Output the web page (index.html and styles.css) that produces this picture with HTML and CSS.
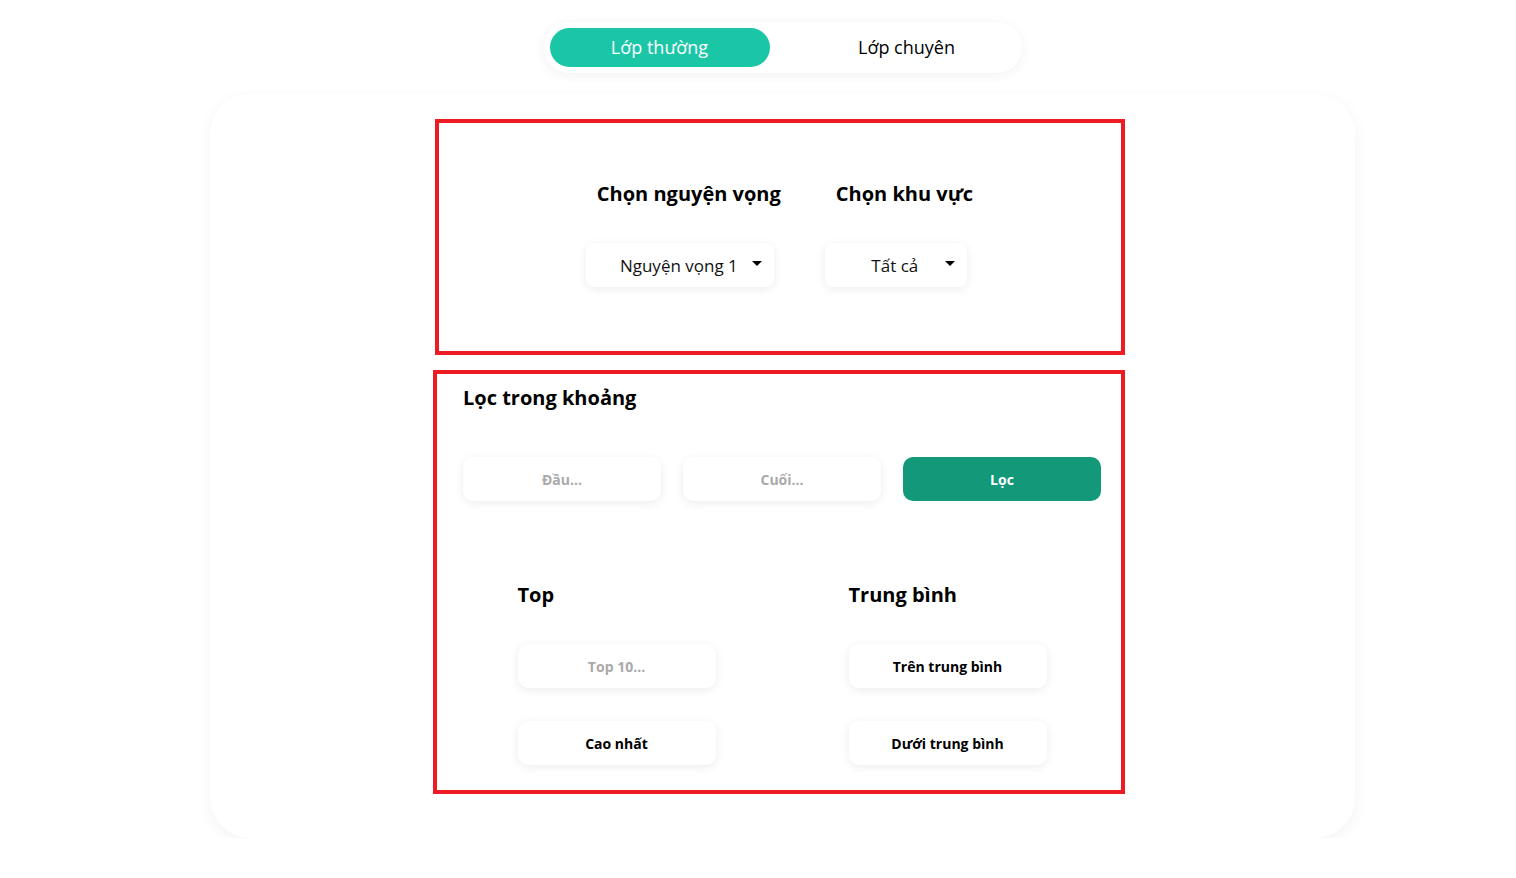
FILE: index.html
```html
<!DOCTYPE html>
<html>
<head>
    <title>Tra cứu điểm</title>
    <link rel="stylesheet" href="styles.css">
</head>
<body>
<div class="page">
    <div class="tabs">
        <button type="button" class="tab tab-active">Lớp thường</button>
        <button type="button" class="tab tab-second">Lớp chuyên</button>
    </div>

    <div class="card">
        <div class="box box-choose">
            <div class="pick">
                <h3 class="pick-title">Chọn nguyện vọng</h3>
                <div class="dropdown dropdown-wide">
                    <span class="dropdown-text">Nguyện vọng 1</span>
                    <span class="caret"></span>
                </div>
            </div>
            <div class="pick">
                <h3 class="pick-title">Chọn khu vực</h3>
                <div class="dropdown dropdown-small">
                    <span class="dropdown-text">Tất cả</span>
                    <span class="caret"></span>
                </div>
            </div>
        </div>

        <div class="box box-filter">
            <h3 class="filter-title">Lọc trong khoảng</h3>
            <div class="range">
                <input type="text" class="field" placeholder="Đầu...">
                <input type="text" class="field" placeholder="Cuối...">
                <button type="button" class="btn-filter">Lọc</button>
            </div>

            <div class="groups">
                <div class="group">
                    <h3 class="group-title">Top</h3>
                    <input type="text" class="field" placeholder="Top 10...">
                    <button type="button" class="field btn-plain">Cao nhất</button>
                </div>
                <div class="group">
                    <h3 class="group-title">Trung bình</h3>
                    <button type="button" class="field btn-plain">Trên trung bình</button>
                    <button type="button" class="field btn-plain">Dưới trung bình</button>
                </div>
            </div>
        </div>
    </div>
</div>
</body>
</html>
```

FILE: styles.css
```css
body {
    margin: 0;
    background: #ffffff;
    font-family: "Open Sans", "Noto Sans", sans-serif;
    color: #000;
}

.page {
    padding-left: 49px;
    padding-top: 22px;
    display: flex;
    flex-direction: column;
    align-items: center;
}

/* tabs on top */
.tabs {
    display: flex;
    width: 466px;
    padding: 6px;
    background: #fff;
    border-radius: 25px;
    box-shadow: 0 2px 12px rgba(0, 0, 0, 0.06);
}

.tab {
    height: 39px;
    padding-bottom: 2px;
    border: none;
    background: none;
    font-family: inherit;
    font-size: 18px;
    color: #000;
    border-radius: 20px;
    cursor: pointer;
}

.tab-active {
    width: 220px;
    background: #1bc6a7;
    color: #fff;
}

.tab-second {
    width: 246px;
    padding-left: 34px;
}

/* main card */
.card {
    box-sizing: border-box;
    width: 1145px;
    height: 744px;
    margin-top: 21px;
    padding-top: 25px;
    padding-right: 7px;
    background: #fff;
    border-radius: 40px;
    box-shadow: 0 4px 16px rgba(0, 0, 0, 0.05);
    display: flex;
    flex-direction: column;
    align-items: center;
    gap: 15px;
}

.box {
    box-sizing: border-box;
    border: 4px solid #ed1c24;
}

.box-choose {
    width: 690px;
    height: 236px;
    margin-left: 1px;
    display: flex;
    justify-content: center;
    gap: 44px;
    padding-top: 59px;
}

.pick {
    display: flex;
    flex-direction: column;
    align-items: flex-start;
}

.pick-title {
    margin: 0 0 37px 11px;
    font-size: 20px;
    line-height: 24px;
    font-weight: 700;
}

.dropdown {
    box-sizing: border-box;
    height: 44px;
    display: flex;
    align-items: center;
    padding: 0 12px 0 26px;
    background: #fff;
    border-radius: 8px;
    box-shadow: 0 2px 10px rgba(0, 0, 0, 0.08);
    font-size: 17px;
    color: #111;
}

.dropdown-wide {
    width: 188px;
}

.dropdown-small {
    width: 142px;
}

.dropdown-text {
    flex: 1;
    text-align: center;
    white-space: nowrap;
}

.caret {
    width: 0;
    height: 0;
    margin-left: 6px;
    margin-top: -3px;
    border-left: 5px solid transparent;
    border-right: 5px solid transparent;
    border-top: 5px solid #000;
}

.box-filter {
    width: 692px;
    height: 424px;
    padding: 12px 20px 0 26px;
}

.filter-title {
    margin: 0;
    font-size: 20px;
    line-height: 24px;
    font-weight: 700;
}

.range {
    display: flex;
    gap: 22px;
    margin-top: 47px;
}

.field {
    box-sizing: border-box;
    width: 198px;
    height: 44px;
    border: none;
    outline: none;
    background: #fff;
    border-radius: 10px;
    box-shadow: 0 2px 10px rgba(0, 0, 0, 0.08);
    font-family: inherit;
    font-size: 14px;
    font-weight: 700;
    text-align: center;
    color: #000;
}

.field::placeholder {
    color: #a9a9a9;
}

.btn-filter {
    width: 198px;
    height: 44px;
    border: none;
    border-radius: 10px;
    background: #13997a;
    color: #fff;
    font-family: inherit;
    font-size: 14px;
    font-weight: 700;
}

.btn-plain {
    cursor: pointer;
}

.groups {
    display: flex;
    justify-content: center;
    gap: 133px;
    margin-top: 82px;
}

.group {
    display: flex;
    flex-direction: column;
    gap: 33px;
}

.group-title {
    margin: 0 0 4px 0;
    font-size: 20px;
    line-height: 24px;
    font-weight: 700;
}
```
